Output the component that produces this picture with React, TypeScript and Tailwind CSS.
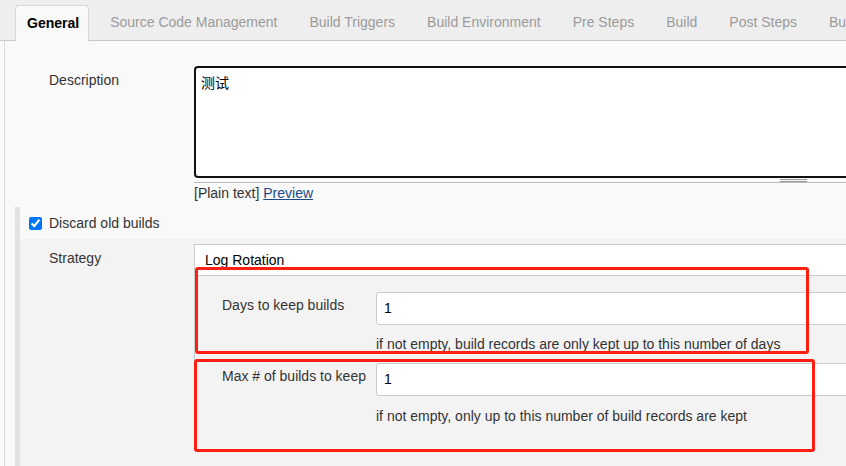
import React from 'react';

const tabs = ['Source Code Management', 'Build Triggers', 'Build Environment', 'Pre Steps', 'Build', 'Post Steps', 'Build Settings'];

export default function App() {
  return (
    <div className="relative w-[846px] h-[466px] overflow-hidden bg-[#f9f9f9] font-['Liberation_Sans',Arial,'Noto_Sans_CJK_SC',sans-serif] text-[14px] text-[#333]">
      <div className="w-[1000px]">
        {/* tab bar */}
        <div className="h-[41px] bg-[#eeeeee] border-b border-[#c8c8c8] flex items-end pl-[15px]">
          <div className="h-[36px] -mb-px pl-[11px] pr-[9px] mr-[5px] bg-[#f9f9f9] border border-b-0 border-[#d6d6d6] rounded-t-[4px] flex items-center font-bold text-black">
            General
          </div>
          {tabs.map((t) => (
            <div key={t} className="h-[36px] px-[16px] flex items-center text-[#9b9b9b] whitespace-nowrap">
              {t}
            </div>
          ))}
        </div>

        <div className="ml-[4px] border-l border-[#dcdcdc] min-h-[425px]">
          {/* description */}
          <div className="flex pt-[25px] pl-[44px]">
            <div className="w-[145px] shrink-0 pt-[5px] leading-[18px]">Description</div>
            <div className="w-[760px] shrink-0">
              <div className="h-[112px] bg-white border-2 border-[#111] rounded-[4px] px-[5px] py-[6px] leading-[18px] text-black">
                测试
              </div>
              <div className="h-[5px] border-b border-[#bbb] flex flex-col gap-[1px] pt-[1px]">
                <div className="ml-[586px] w-[27px] h-px bg-[#999]" />
                <div className="ml-[586px] w-[27px] h-px bg-[#999]" />
              </div>
              <div className="leading-[18px] pt-[1px]">
                [Plain text] <span className="text-[#204a87] underline">Preview</span>
              </div>
            </div>
          </div>

          {/* discard old builds */}
          <div className="mt-[5px] ml-[10px] border-l-[5px] border-[#e2e2e2] h-[262px]">
            <div className="h-[32px] flex items-center pl-[9px]">
              <input type="checkbox" defaultChecked className="w-[13px] h-[13px] m-0 accent-[#0075ff]" />
              <span className="ml-[7px] leading-[18px]">Discard old builds</span>
            </div>
            <div className="bg-[#f3f3f3] h-full pt-[5px] pl-[29px]">
              <div className="flex">
                <div className="w-[145px] shrink-0 pt-[5px] leading-[18px]">Strategy</div>
                <div className="w-[760px] shrink-0">
                  <div className="h-[31px] bg-white border border-r-0 border-b-0 border-[#ccc] pl-[10px] pt-[6px] leading-[18px] text-black">
                    Log Rotation
                  </div>
                  <div className="border-t border-[#ccc] border-l bg-[#f3f3f3] pt-[16px] pl-[27px]">
                    <div className="flex">
                      <div className="w-[154px] shrink-0 pt-[4px] leading-[18px]">Days to keep builds</div>
                      <div className="flex-1">
                        <div className="h-[33px] bg-white border border-[#ccc] rounded-[3px] pl-[7px] flex items-center text-black">1</div>
                        <div className="mt-[10px] mb-[10px] leading-[18px]">
                          if not empty, build records are only kept up to this number of days
                        </div>
                      </div>
                    </div>
                    <div className="flex">
                      <div className="w-[154px] shrink-0 pt-[4px] leading-[18px]">Max # of builds to keep</div>
                      <div className="flex-1">
                        <div className="h-[33px] bg-white border border-[#ccc] rounded-[3px] pl-[7px] flex items-center text-black">1</div>
                        <div className="mt-[11px] leading-[18px]">
                          if not empty, only up to this number of build records are kept
                        </div>
                      </div>
                    </div>
                  </div>
                </div>
              </div>
            </div>
          </div>
        </div>
      </div>

      {/* annotation boxes */}
      <div className="absolute left-[195px] top-[267px] w-[614px] h-[87px] border-[3px] border-[#ff1f12] rounded-[3px]" />
      <div className="absolute left-[194px] top-[359px] w-[621px] h-[93px] border-[3px] border-[#ff1f12] rounded-[3px]" />
    </div>
  );
}
